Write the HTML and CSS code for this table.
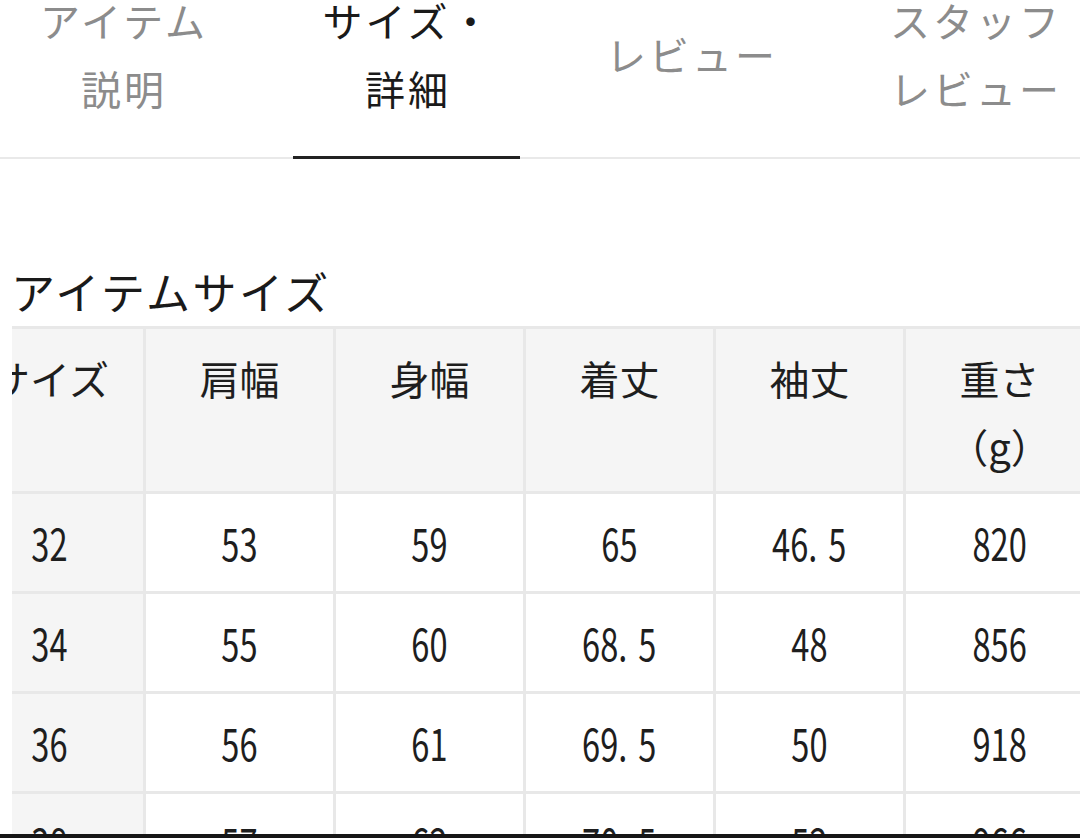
FILE: index.html
```html
<!DOCTYPE html>
<html lang="ja">
<head>
<meta charset="utf-8">
<title>サイズ・詳細</title>
<link rel="stylesheet" href="styles.css">
</head>
<body>
<nav class="tabs">
  <div class="tab">アイテム<br>説明</div>
  <div class="tab active">サイズ・<br>詳細</div>
  <div class="tab">レビュー</div>
  <div class="tab">スタッフ<br>レビュー</div>
</nav>

<section class="size">
  <h2 class="size-title">アイテムサイズ</h2>
  <div class="table-wrap">
    <div class="size-grid">
      <div class="cell head key">サイズ</div>
      <div class="cell head">肩幅</div>
      <div class="cell head">身幅</div>
      <div class="cell head">着丈</div>
      <div class="cell head">袖丈</div>
      <div class="cell head">重さ<br>（g）</div>

      <div class="cell key"><span class="n">32</span></div>
      <div class="cell"><span class="n">53</span></div>
      <div class="cell"><span class="n">59</span></div>
      <div class="cell"><span class="n">65</span></div>
      <div class="cell"><span class="n">46<span class="pt">.</span>5</span></div>
      <div class="cell"><span class="n">820</span></div>

      <div class="cell key"><span class="n">34</span></div>
      <div class="cell"><span class="n">55</span></div>
      <div class="cell"><span class="n">60</span></div>
      <div class="cell"><span class="n">68<span class="pt">.</span>5</span></div>
      <div class="cell"><span class="n">48</span></div>
      <div class="cell"><span class="n">856</span></div>

      <div class="cell key"><span class="n">36</span></div>
      <div class="cell"><span class="n">56</span></div>
      <div class="cell"><span class="n">61</span></div>
      <div class="cell"><span class="n">69<span class="pt">.</span>5</span></div>
      <div class="cell"><span class="n">50</span></div>
      <div class="cell"><span class="n">918</span></div>

      <div class="cell key"><span class="n">38</span></div>
      <div class="cell"><span class="n">57</span></div>
      <div class="cell"><span class="n">62</span></div>
      <div class="cell"><span class="n">70<span class="pt">.</span>5</span></div>
      <div class="cell"><span class="n">52</span></div>
      <div class="cell"><span class="n">966</span></div>
    </div>
  </div>
</section>

<div class="home-bar"></div>
</body>
</html>
```

FILE: styles.css
```css
* {
  box-sizing: border-box;
}

html, body {
  margin: 0;
  padding: 0;
  height: 100%;
  overflow: hidden;
  background: #ffffff;
}

body {
  font-family: "Noto Sans CJK JP", "Noto Sans", sans-serif;
  color: #1e1e1e;
}

/* ---------- tabs ---------- */
.tabs {
  display: flex;
  gap: 57px;
  padding-left: 9px;
  margin-top: -14px;
  height: 173px;
  border-bottom: 2px solid #e9e9e9;
}

.tab {
  position: relative;
  flex: 0 0 227px;
  height: 171px;
  padding-bottom: 35px;
  padding-left: 3px;
  display: flex;
  align-items: center;
  justify-content: center;
  text-align: center;
  font-size: 40px;
  line-height: 68px;
  letter-spacing: 3px;
  color: #8c8c8c;
  white-space: nowrap;
}

.tab.active {
  color: #1a1a1a;
}

.tab.active::after {
  content: "";
  position: absolute;
  left: 0;
  right: 0;
  bottom: -2px;
  height: 3px;
  background: #222222;
}

/* ---------- size section ---------- */
.size {
  padding-top: 102px;
}

.size-title {
  margin: 0 0 5px;
  padding-left: 11px;
  font-size: 44px;
  line-height: 60px;
  font-weight: 400;
  letter-spacing: 2.5px;
  color: #1a1a1a;
}

.table-wrap {
  margin-left: 12px;
  overflow: hidden;
}

.size-grid {
  display: grid;
  grid-template-columns: repeat(6, 190px);
  grid-template-rows: 165px;
  grid-auto-rows: 100px;
  width: 1140px;
  margin-left: -56px;
  border-top: 3px solid #e8e8e8;
}

.cell {
  display: flex;
  align-items: center;
  justify-content: center;
  border-right: 3px solid #e8e8e8;
  border-bottom: 3px solid #e8e8e8;
  background: #ffffff;
  font-size: 44px;
  color: #1e1e1e;
}

.cell.key {
  background: #f5f5f5;
}

.cell.head {
  align-items: flex-start;
  padding-top: 15px;
  background: #f5f5f5;
  font-size: 40px;
  line-height: 68px;
  text-align: center;
}

.n {
  display: inline-block;
  transform: scaleX(0.74);
  line-height: 1;
  margin-top: -2px;
}

.pt {
  margin-right: 15px;
}

.home-bar {
  position: fixed;
  left: 0;
  right: 0;
  bottom: 0;
  height: 4px;
  background: #161616;
}
```
